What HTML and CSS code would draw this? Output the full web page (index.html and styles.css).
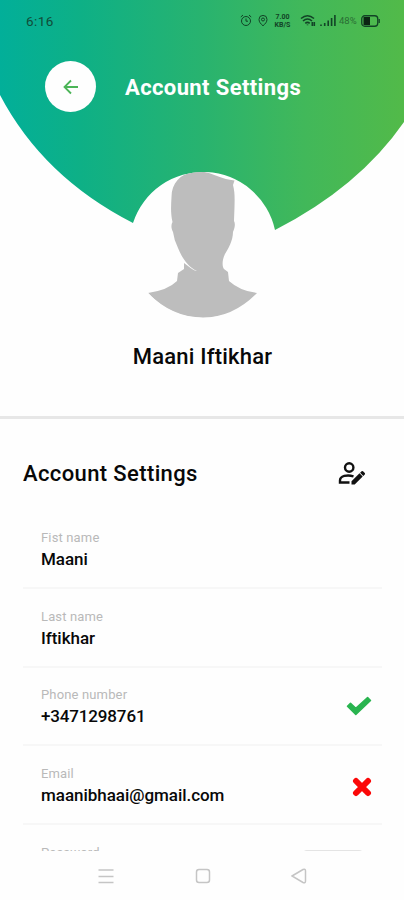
FILE: index.html
```html
<!DOCTYPE html>
<html lang="en">
<head>
  <meta charset="UTF-8" />
  <meta name="viewport" content="width=device-width, initial-scale=1.0" />
  <title>Account Settings</title>
  <link rel="stylesheet" href="styles.css">
</head>
<body>
  <header class="profile">
    <svg class="profile-bg" viewBox="0 0 404 245">
      <defs>
        <linearGradient id="green" x1="0" y1="0" x2="1" y2="0">
          <stop offset="0" stop-color="#02af99" />
          <stop offset="0.2" stop-color="#0eb086" />
          <stop offset="0.5" stop-color="#28b36f" />
          <stop offset="0.75" stop-color="#41b85a" />
          <stop offset="1" stop-color="#52ba49" />
        </linearGradient>
      </defs>
      <path fill="url(#green)" d="M0 0H404V122Q359 187 275 230A73.600 73.600 0 0 0 133 223Q43 177 0 95Z" />
    </svg>

    <div class="status-bar">
      <span class="time">6:16</span>
      <div class="status-icons">
        <svg class="alarm" width="12" height="13" viewBox="0 0 12 13">
          <circle cx="6" cy="7" r="4.5" />
          <path d="M.8 3L3 1M11.2 3L9 1M6 4.5V7.2H8" />
        </svg>
        <svg class="pin" width="10" height="13" viewBox="0 0 10 13">
          <path d="M5 11.8C2.7 9.8 1 8 1 5.4a4 4 0 0 1 8 0C9 8 7.3 9.8 5 11.8Z" />
          <circle cx="5" cy="5.5" r="1.5" />
        </svg>
        <div class="speed"><span>7.00</span><span>KB/S</span></div>
        <svg class="wifi" width="16" height="13" viewBox="0 0 16 13">
          <path d="M1 4.5Q7.5-1 14 4.5M3 7Q7.5 3 12 7M5.3 9.3Q7.5 7.3 9.7 9.3" />
          <path d="M7.5 11.2V10.5M12.3 8V12M14.3 8V12" />
        </svg>
        <svg class="signal" width="16" height="13" viewBox="0 0 16 13">
          <path d="M1 12V10.5M4.7 12V9M8.2 12V6.5M11.6 12V4M14.9 12V1" />
        </svg>
        <span class="percent">48%</span>
        <svg class="battery" width="19" height="12" viewBox="0 0 19 12">
          <rect x=".75" y=".75" width="16" height="10.5" rx="3" />
          <path class="charge" d="M2.500 2H9V10H2.500Z" />
          <path d="M18.200 4V8" />
        </svg>
      </div>
    </div>

    <div class="title-bar">
      <button class="back" aria-label="Back">
        <svg width="16" height="16" viewBox="0 0 16 16">
          <path d="M15 8H2M8 1.5L1.5 8L8 14.5" />
        </svg>
      </button>
      <h1>Account Settings</h1>
    </div>

    <svg class="avatar" width="146" height="146" viewBox="130 172 146 146">
      <path d="M171.500 197C171.500 181 183 172 198 171.500C211 171 219 179 234.500 180.500L233 185C235.500 194 234.500 204 234 221C236 225 234 229 233 232C233 241 228 249 225 254C222 260 222 266 224 269L228 272L229 281Q240 291 257 293Q233 317.500 203 317.500Q172 317.500 148 293Q168 290 177 281L178 273L184 269L184 263L188 266Q194 271 197 271C188 267 182 258 178 248Q174 240 173 232C171 228 171 225 172.500 222C170.500 213 171 206 171.500 197Z" />
    </svg>
    <div class="profile-name">Maani Iftikhar</div>
  </header>

  <main class="settings">
    <div class="settings-head">
      <h2>Account Settings</h2>
      <svg class="edit" width="28" height="24" viewBox="0 0 28 24">
        <circle cx="11.2" cy="5.5" r="4.2" />
        <path d="M11.5 20.5H2V18.5C2 14 9 12.3 15.5 14.3" />
        <path class="pencil" d="M13.5 19.3L21.5 11.3L24.7 14.5L16.7 22.5H13.5ZM22.1 10.7L23.6 9.2Q24.3 8.6 25 9.2L26.8 11Q27.4 11.7 26.8 12.4L25.3 13.9Z" />
      </svg>
    </div>

    <div class="field">
      <div>
        <label>Fist name</label>
        <p>Maani</p>
      </div>
    </div>
    <div class="field">
      <div>
        <label>Last name</label>
        <p>Iftikhar</p>
      </div>
    </div>
    <div class="field">
      <div>
        <label>Phone number</label>
        <p class="phone">+3471298761</p>
      </div>
      <svg class="check" width="26" height="20" viewBox="0 0 26 20">
        <path d="M1.5 10.3L4.5 7.3L9.8 12.4L21.600 1.500L24.500 4.500L9.800 18.500Z" />
      </svg>
    </div>
    <div class="field">
      <div>
        <label>Email</label>
        <p>maanibhaai@gmail.com</p>
      </div>
      <svg class="cross" width="20" height="20" viewBox="0 0 20 20">
        <path d="M4 4L16 16M16 4L4 16" />
      </svg>
    </div>
    <div class="field">
      <div>
        <label>Password</label>
      </div>
      <button class="change" aria-label="Change password"></button>
    </div>
  </main>

  <nav class="nav-bar">
    <svg width="16" height="16" viewBox="0 0 16 16"><path d="M.5 2H15.5M.5 8.5H15.5M.5 14.5H15.5" /></svg>
    <svg width="16" height="16" viewBox="0 0 16 16"><rect x="1.5" y="1.5" width="13" height="13" rx="2.5" /></svg>
    <svg width="16" height="16" viewBox="0 0 16 16"><path d="M1 8L12 1.5Q14.500.5 14.500 3V13Q14.500 15.500 12 14.500Z" /></svg>
  </nav>
</body>
</html>
```

FILE: styles.css
```css
* {
  box-sizing: border-box;
}
body {
  margin: 0;
  height: 900px;
  display: flex;
  flex-direction: column;
  overflow: hidden;
  background: #fefefe;
  color: #080808;
  font-family: Roboto, "Liberation Sans", sans-serif;
}
h1, h2, p {
  margin: 0;
}
svg {
  display: block;
  flex: none;
  fill: none;
}
button {
  padding: 0;
  border: 0;
}
.profile {
  position: relative;
  flex: none;
  height: 419px;
  border-bottom: 3px solid #e7e7e7;
  display: flex;
  flex-direction: column;
}
.profile-bg {
  position: absolute;
  top: 0;
  left: 0;
  width: 404px;
  height: 245px;
  z-index: -1;
}
.status-bar {
  height: 41px;
  padding: 0 24px 0 26px;
  display: flex;
  align-items: center;
  justify-content: space-between;
  color: #114c38;
}
.time {
  font-size: 13.5px;
  letter-spacing: 0.4px;
}
.status-icons {
  display: flex;
  align-items: center;
  stroke: #124326;
}
.alarm { margin-right: 6px; }
.pin { margin-right: 5px; }
.speed {
  width: 19px;
  margin-right: 8px;
  display: flex;
  flex-direction: column;
  align-items: center;
  font-size: 7px;
  line-height: 8px;
  font-weight: 700;
  color: #124326;
}
.wifi { margin-right: 4px; }
.wifi, .signal { stroke-width: 1.6; }
.percent {
  width: 19px;
  margin: 0 3px 0 3px;
  font-size: 9.5px;
  color: #2a6e34;
}
.battery { stroke-width: 1.3; }
.charge {
  fill: #0b2513;
  stroke: none;
}
.title-bar {
  height: 51px;
  margin-top: 20px;
  padding-left: 45px;
  display: flex;
  align-items: center;
  gap: 29px;
}
.back {
  width: 51px;
  height: 51px;
  border-radius: 50%;
  background: #fefefe;
  display: flex;
  align-items: center;
  justify-content: center;
  stroke: #4cb558;
  stroke-width: 1.8;
}
h1 {
  padding-top: 2px;
  font-size: 22px;
  font-weight: 700;
  letter-spacing: 0.38px;
  color: #fff;
}
.avatar {
  align-self: center;
  margin: 60px 0 0 2px;
  border-radius: 50%;
  fill: #bdbdbd;
}
.profile-name {
  margin-top: 25px;
  padding-left: 1px;
  text-align: center;
  font-size: 22px;
  line-height: 28px;
  font-weight: 500;
  letter-spacing: 0.22px;
}
.settings {
  height: 432px;
  overflow: hidden;
  padding: 0 22px 0 23px;
}
.settings-head {
  height: 91.5px;
  padding: 18px 16px 0 0;
  display: flex;
  align-items: center;
  justify-content: space-between;
}
h2 {
  font-size: 22px;
  font-weight: 500;
  letter-spacing: 0.38px;
}
.edit {
  stroke: #111;
  stroke-width: 2.4;
}
.pencil {
  fill: #111;
  stroke: none;
}
.field {
  height: 78.6px;
  padding: 19.8px 10px 0 18px;
  border-bottom: 2px solid #f7f7f7;
  display: flex;
  justify-content: space-between;
}
.field label {
  display: block;
  font-size: 13px;
  line-height: 16px;
  letter-spacing: 0.15px;
  color: #b9b9b9;
}
.field p {
  margin-top: 1.7px;
  font-size: 17px;
  line-height: 23px;
  font-weight: 500;
  letter-spacing: -0.04px;
}
.field .phone {
  letter-spacing: -0.15px;
}
.check {
  margin-top: 9px;
  fill: #29b44f;
  stroke: #29b44f;
  stroke-width: 1.5;
  stroke-linejoin: round;
}
.cross {
  margin-top: 11px;
  stroke: #fb0808;
  stroke-width: 6;
  stroke-linecap: round;
}
.change {
  width: 62px;
  height: 30px;
  margin: 5px 8px 0 0;
  border-top: 2px solid #e4e4e4;
  border-radius: 5px;
  background: none;
}
.nav-bar {
  height: 49px;
  padding: 0 97px 0 98px;
  display: flex;
  align-items: center;
  justify-content: space-between;
  stroke: #c5c5c5;
  stroke-width: 1.5;
}
```
